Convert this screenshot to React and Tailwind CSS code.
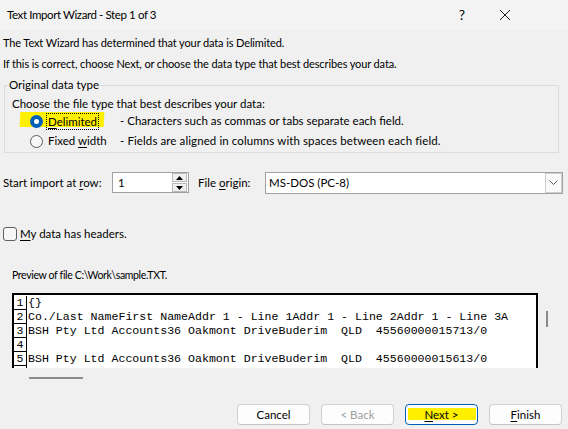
import React from "react";

const rows = [
  "{}",
  "Co./Last NameFirst NameAddr 1 - Line 1Addr 1 - Line 2Addr 1 - Line 3A",
  "BSH Pty Ltd Accounts36 Oakmont DriveBuderim  QLD  45560000015713/0",
  "",
  "BSH Pty Ltd Accounts36 Oakmont DriveBuderim  QLD  45560000015613/0",
];

function Btn({ children, primary, disabled }) {
  return (
    <button
      className={
        "w-[73px] h-[21px] rounded-[4px] bg-[#fdfdfd] relative flex items-center justify-center " +
        (primary
          ? "border border-[#005fb8] shadow-[inset_0_0_0_1px_#ffffff]"
          : "border border-[#d0d0d0] border-b-[#c4c4c4]") +
        (disabled ? " text-[#9d9d9d]" : " text-black")
      }
    >
      {children}
    </button>
  );
}

export default function App() {
  return (
    <div className="w-[568px] h-[429px] overflow-hidden bg-[#f0f0f0] text-black text-[11.5px] leading-[16px] font-['Lato',sans-serif] flex flex-col">
      {/* caption bar */}
      <div className="h-[30px] shrink-0 bg-[#f3f3f3] flex items-center pl-[7px] pr-[53px]">
        <span className="flex-1 text-[11.5px] tracking-[-0.4px]">Text Import Wizard - Step 1 of 3</span>
        <span className="w-[20px] text-center text-[14px]">?</span>
        <span className="w-[20px] ml-[23px] flex justify-center">
          <svg width="12" height="12" viewBox="0 0 12 12" stroke="#1a1a1a" strokeWidth="1">
            <path d="M1 1L11 11M11 1L1 11" />
          </svg>
        </span>
      </div>

      <div className="pl-[3px] pr-[5px] flex flex-col">
        <p className="mt-[5px] text-[11px] tracking-[-0.12px]">The Text Wizard has determined that your data is Delimited.</p>
        <p className="mt-[5px] text-[11px] tracking-[-0.12px]">If this is correct, choose Next, or choose the data type that best describes your data.</p>

        {/* data type group */}
        <fieldset className="mt-[5px] ml-[1px] w-[555px] border border-[#dcdcdc] px-0 pb-[3px] m-0">
          <legend className="ml-[3px] px-[1px] leading-[16px]">Original data type</legend>
          <div className="pl-[7px] mt-[3px]">Choose the file type that best describes your data:</div>

          <div className="relative flex items-center h-[16px] mt-[1px] pl-[25px]">
            <span className="absolute left-[15px] top-[-1px] w-[84px] h-[15px] bg-[#fff000] -skew-x-3" />
            <span className="relative w-[13px] h-[13px] rounded-full bg-[#005fb8] flex items-center justify-center">
              <span className="w-[5px] h-[5px] rounded-full bg-white" />
            </span>
            <span className="relative ml-[3px] w-[74px]">
              <span className="border border-dotted border-black px-[1px] leading-[15px] inline-block">
                <span className="underline underline-offset-2">D</span>elimited
              </span>
            </span>
            <span className="relative whitespace-nowrap">- Characters such as commas or tabs separate each field.</span>
          </div>

          <div className="flex items-center h-[16px] mt-[4px] pl-[25px]">
            <span className="w-[13px] h-[13px] rounded-full border border-[#5c5c5c] bg-[#f7f7f7]" />
            <span className="ml-[3px] w-[74px] pl-[2px] whitespace-nowrap">
              Fixed <span className="underline underline-offset-2">w</span>idth
            </span>
            <span className="whitespace-nowrap tracking-[0.1px]">- Fields are aligned in columns with spaces between each field.</span>
          </div>
        </fieldset>

        {/* import options */}
        <div className="mt-[19px] flex items-center h-[21px]">
          <span className="w-[109px] whitespace-nowrap">
            Start import at <span className="underline underline-offset-2">r</span>ow:
          </span>
          <div className="w-[77px] h-[21px] bg-white border border-[#a0a0a0] flex items-center">
            <span className="flex-1 pl-[5px]">1</span>
            <div className="w-[16px] h-[19px] flex flex-col gap-[1px] pr-[1px]">
              <div className="flex-1 border border-[#b9b9b9] bg-[#f0f0f0] flex items-center justify-center">
                <svg width="7" height="4" viewBox="0 0 7 4"><path d="M3.5 0L7 4H0Z" fill="#000" /></svg>
              </div>
              <div className="flex-1 border border-[#b9b9b9] bg-[#f0f0f0] flex items-center justify-center">
                <svg width="7" height="4" viewBox="0 0 7 4"><path d="M0 0H7L3.5 4Z" fill="#000" /></svg>
              </div>
            </div>
          </div>
          <span className="ml-[9px] w-[67px] whitespace-nowrap">
            File <span className="underline underline-offset-2">o</span>rigin:
          </span>
          <div className="w-[298px] h-[22px] bg-white border border-[#a0a0a0] flex items-center">
            <span className="flex-1 pl-[3px]">MS-DOS (PC-8)</span>
            <div className="w-[17px] h-[20px] border border-[#cfcfcf] bg-[#fafafa] flex items-center justify-center">
              <svg width="9" height="5" viewBox="0 0 9 5" fill="none" stroke="#606060" strokeWidth="1">
                <path d="M0.5 0.5L4.5 4.5L8.5 0.5" />
              </svg>
            </div>
          </div>
        </div>

        {/* header checkbox */}
        <div className="mt-[33px] flex items-center h-[16px]">
          <span className="w-[14px] h-[14px] rounded-[3px] border border-[#5f5f5f] bg-[#f6f6f6]" />
          <span className="ml-[3px]">
            <span className="underline underline-offset-2">M</span>y data has headers.
          </span>
        </div>

        <div className="mt-[25px] pl-[9px] text-[10.5px] tracking-[-0.35px]">Preview of file C:\Work\sample.TXT.</div>

        {/* preview */}
        <div className="mt-[10px] flex">
          <div className="ml-[9px] w-[526px] h-[75px] border-t-2 border-x-2 border-black bg-white overflow-hidden pt-[1px] font-['Liberation_Mono',monospace] text-[11.6px] leading-[14px]">
            {rows.map((r, i) => (
              <div key={i} className="flex h-[14px]">
                <span className="w-[13px] shrink-0 border-r border-b border-black text-center">{i + 1}</span>
                <span className="whitespace-pre pl-[1px]">{r}</span>
              </div>
            ))}
            <div className="w-[13px] h-[14px] border-r border-black" />
          </div>
          <div className="ml-[8px] mt-[18px] w-[2px] h-[16px] bg-[#8a8a8a]" />
        </div>
        <div className="h-[20px] pl-[26px] pt-[9px]">
          <div className="w-[54px] h-[2px] bg-[#8a8a8a]" />
        </div>

        {/* wizard buttons */}
        <div className="mt-[16px] flex justify-end gap-[11px] pr-[1px]">
          <Btn>Cancel</Btn>
          <Btn disabled>&lt; Back</Btn>
          <Btn primary>
            <span className="absolute left-[2px] top-[3px] w-[68px] h-[12px] bg-[#fff000]" />
            <span className="relative">
              <span className="underline underline-offset-2">N</span>ext &gt;
            </span>
          </Btn>
          <Btn>
            <span className="underline underline-offset-2">F</span>inish
          </Btn>
        </div>
      </div>
    </div>
  );
}
